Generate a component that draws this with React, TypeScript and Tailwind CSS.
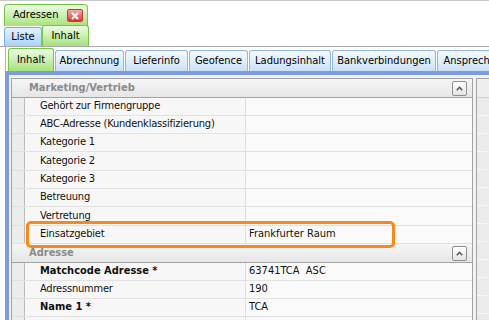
import React from "react";

const font = "font-['DejaVu_Sans_Condensed','DejaVu_Sans',sans-serif]";

type Row = { label: string; value?: string; bold?: boolean; tall?: boolean };

const marketing: Row[] = [
  { label: "Gehört zur Firmengruppe" },
  { label: "ABC-Adresse (Kundenklassifizierung)" },
  { label: "Kategorie 1" },
  { label: "Kategorie 2", tall: true },
  { label: "Kategorie 3" },
  { label: "Betreuung" },
  { label: "Vertretung", tall: true },
  { label: "Einsatzgebiet", value: "Frankfurter Raum" },
];

const adresse: Row[] = [
  { label: "Matchcode Adresse *", value: "63741TCA  ASC", bold: true },
  { label: "Adressnummer", value: "190" },
  { label: "Name 1 *", value: "TCA", bold: true },
  { label: "" },
];

const subTabs = [
  { title: "Abrechnung", w: "w-[69px]" },
  { title: "Lieferinfo", w: "w-[63px]" },
  { title: "Geofence", w: "w-[59px]" },
  { title: "Ladungsinhalt", w: "w-[82px]" },
  { title: "Bankverbindungen", w: "w-[104px]" },
  { title: "Ansprechpartner", w: "w-[96px]" },
];

function CollapseButton() {
  return (
    <div className="w-[15px] h-[15px] rounded-[2px] border border-[#8e8e8e] bg-linear-to-b from-white to-[#e4e4e4] flex items-center justify-center">
      <svg width="7" height="5" viewBox="0 0 7 5">
        <polyline points="0.8,4.2 3.5,1.3 6.2,4.2" fill="none" stroke="#555" strokeWidth="1.6" />
      </svg>
    </div>
  );
}

function SectionHeader({ title }: { title: string }) {
  return (
    <div className="h-[19px] flex items-center justify-between border-b border-[#a3a3a3] bg-linear-to-b from-[#f6f6f6] to-[#e6e6e6] pl-[17px] pr-[5px]">
      <span className="font-bold text-[11px] text-[#8a8a8a]">{title}</span>
      <CollapseButton />
    </div>
  );
}

function GridRow({ row }: { row: Row }) {
  return (
    <div className={`${row.tall ? "h-[19px]" : "h-[18px]"} flex border-b border-[#e1e1e1]`}>
      <div className="w-[13px] bg-[#ececec] border-r border-[#bdbdbd]" />
      <div
        className={`w-[221px] pl-[15px] flex items-center bg-[#f7f7f7] border-r border-[#dedede] text-[11px] text-[#111] ${
          row.bold ? "font-bold" : "tracking-[-0.2px]"
        }`}
      >
        {row.label}
      </div>
      <div className="flex-1 pl-[3px] flex items-center bg-[#fafafa] text-[11px] text-[#111] whitespace-pre">
        {row.value}
      </div>
    </div>
  );
}

export default function App() {
  return (
    <div className={`w-[489px] h-[320px] overflow-hidden bg-white ${font}`}>
      {/* top level tab */}
      <div className="h-[26px] flex items-end pl-[4px] border-t border-[#c8c8c8]">
        <div className="h-[22px] w-[84px] rounded-t-[4px] border border-b-0 border-[#73c545] bg-linear-to-b from-[#eefbe4] to-[#a6e27a] flex items-center pl-[8px] gap-[9px] text-[11px] text-black">
          <span>Adressen</span>
          <span className="w-[16px] h-[13px] rounded-[2px] border border-[#c23a3a] bg-linear-to-b from-[#f9a8a8] to-[#dc3030] flex items-center justify-center">
            <svg width="8" height="8" viewBox="0 0 8 8">
              <path d="M1 1 L7 7 M7 1 L1 7" stroke="white" strokeWidth="2" />
            </svg>
          </span>
        </div>
      </div>

      {/* second level tabs */}
      <div className="h-[21px] flex items-end pl-[4px] border-b border-[#a8a8a8]">
        <div className="h-[19px] w-[38px] shrink-0 rounded-t-[3px] border border-b-0 border-[#7eaede] bg-linear-to-b from-[#e4f2fe] to-[#a9d2f5] flex items-center justify-center text-[11px] text-black">
          Liste
        </div>
        <div className="h-[21px] w-[47px] shrink-0 rounded-t-[3px] border border-b-0 border-[#73c545] bg-linear-to-b from-[#eefbe4] to-[#a6e27a] flex items-center justify-center text-[11px] text-black">
          Inhalt
        </div>
      </div>

      {/* content */}
      <div className="ml-[5px] border-l border-[#b0b0b0]">
        <div className="h-[24px] flex items-end gap-[1px] pl-[2px]">
          <div className="h-[23px] w-[46px] shrink-0 rounded-t-[3px] border border-b-0 border-[#73c545] bg-linear-to-b from-[#eefbe4] to-[#a6e27a] flex items-center justify-center text-[11px] text-black">
            Inhalt
          </div>
          {subTabs.map((t) => (
            <div
              key={t.title}
              className={`${t.w} shrink-0 h-[21px] rounded-t-[3px] border border-b-0 border-[#93b8de] bg-linear-to-b from-[#f6fafe] to-[#c8e1f7] flex items-center justify-center text-[11px] text-black whitespace-nowrap overflow-hidden`}
            >
              {t.title}
            </div>
          ))}
        </div>

        <div className="border-t-4 border-l-4 border-[#7e9be0] -ml-px bg-[#f2f2f2] h-[250px] pt-[3px] pl-[2px] flex gap-[3px]">
          <div className="relative w-[462px] shrink-0 border border-[#a3a3a3] bg-[#fafafa] self-start">
            <SectionHeader title="Marketing/Vertrieb" />
            {marketing.map((r) => (
              <GridRow key={r.label} row={r} />
            ))}
            <SectionHeader title="Adresse" />
            {adresse.map((r, i) => (
              <GridRow key={i} row={r} />
            ))}

            {/* highlight */}
            <div className="absolute left-[14px] top-[142px] w-[369px] h-[27px] border-[3px] border-[#f7891d] rounded-[5px]" />
          </div>

          <div className="flex-1 border-l border-t border-[#a3a3a3] bg-[#e9e9e9] self-stretch">
            <div className="h-[19px] border-b border-[#d0d0d0] bg-[#eeeeee]" />
            {Array.from({ length: 12 }).map((_, i) => (
              <div key={i} className="h-[18px] border-b border-[#f6f6f6] bg-[#ebebeb]" />
            ))}
          </div>
        </div>
      </div>
    </div>
  );
}
